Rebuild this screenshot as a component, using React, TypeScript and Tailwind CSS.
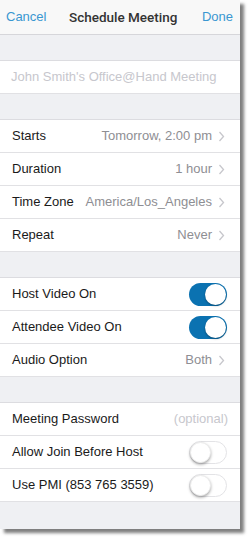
import React from "react";

const font = { fontFamily: '"Liberation Sans", Arial, sans-serif' };

function Chevron() {
  return (
    <svg width="7" height="11" viewBox="0 0 7 11" className="ml-[6px] shrink-0">
      <polyline points="1.5,1 5.5,5.5 1.5,10" fill="none" stroke="#c7c7cc" strokeWidth="1.3" />
    </svg>
  );
}

function Toggle({ on }: { on: boolean }) {
  return on ? (
    <div className="relative w-[38px] h-[23px] rounded-full bg-[#0b72b1]">
      <div className="absolute right-[1px] top-[1px] w-[21px] h-[21px] rounded-full bg-white shadow-[0_1px_2px_rgba(0,0,0,0.35)]" />
    </div>
  ) : (
    <div className="relative w-[38px] h-[23px] rounded-full bg-white border border-[#e3e3e6]">
      <div className="absolute left-0 top-0 w-[21px] h-[21px] rounded-full bg-white shadow-[0_1.5px_3px_rgba(0,0,0,0.35)] border border-[#ececec]" />
    </div>
  );
}

function NavRow({ label, value }: { label: string; value: string }) {
  return (
    <div className="flex items-center h-[33px] pl-[12px] pr-[15px] border-b border-[#e1e1e4] bg-white">
      <span className="text-[13px] text-[#1a1a1a]">{label}</span>
      <span className="ml-auto text-[13px] text-[#8e8e93]">{value}</span>
      <Chevron />
    </div>
  );
}

function ToggleRow({ label, on }: { label: string; on: boolean }) {
  return (
    <div className="flex items-center h-[33px] pl-[12px] pr-[13px] border-b border-[#e1e1e4] bg-white">
      <span className="text-[13px] text-[#1a1a1a]">{label}</span>
      <span className="ml-auto">
        <Toggle on={on} />
      </span>
    </div>
  );
}

function Section({ children }: { children: React.ReactNode }) {
  return <div className="border-t border-[#dcdce0]">{children}</div>;
}

export default function App() {
  return (
    <div className="w-[251px] h-[541px] bg-white" style={font}>
      <div className="w-[240px] h-[529px] bg-[#eff0f3] shadow-[4px_4px_3px_rgba(0,0,0,0.5)] flex flex-col">
        <div className="h-[35px] bg-[#f8f8f8] border-b border-[#d6d6da] flex items-center px-[6px]">
          <span className="text-[13px] text-[#3a97d1]">Cancel</span>
          <span
            className="flex-1 text-center text-[13.5px] font-medium text-[#333] pr-[2px]"
            style={{ fontFamily: 'Roboto, "Liberation Sans", sans-serif' }}
          >
            Schedule Meeting
          </span>
          <span className="text-[13px] text-[#3a97d1] pr-[1px]">Done</span>
        </div>
        <div className="h-[25px] shrink-0" />
        <Section>
          <div className="flex items-center h-[33px] pl-[11px] border-b border-[#e1e1e4] bg-white">
            <span className="text-[13px] text-[#c7c7cd]">John Smith's Office@Hand Meeting</span>
          </div>
        </Section>
        <div className="h-[25px] shrink-0" />
        <Section>
          <NavRow label="Starts" value="Tomorrow, 2:00 pm" />
          <NavRow label="Duration" value="1 hour" />
          <NavRow label="Time Zone" value="America/Los_Angeles" />
          <NavRow label="Repeat" value="Never" />
        </Section>
        <div className="h-[25px] shrink-0" />
        <Section>
          <ToggleRow label="Host Video On" on />
          <ToggleRow label="Attendee Video On" on />
          <NavRow label="Audio Option" value="Both" />
        </Section>
        <div className="h-[25px] shrink-0" />
        <Section>
          <div className="flex items-center h-[33px] pl-[12px] pr-[12px] border-b border-[#e1e1e4] bg-white">
            <span className="text-[13px] text-[#1a1a1a]">Meeting Password</span>
            <span className="ml-auto text-[13px] text-[#c7c7cd]">(optional)</span>
          </div>
          <ToggleRow label="Allow Join Before Host" on={false} />
          <ToggleRow label="Use PMI (853 765 3559)" on={false} />
        </Section>
      </div>
    </div>
  );
}
